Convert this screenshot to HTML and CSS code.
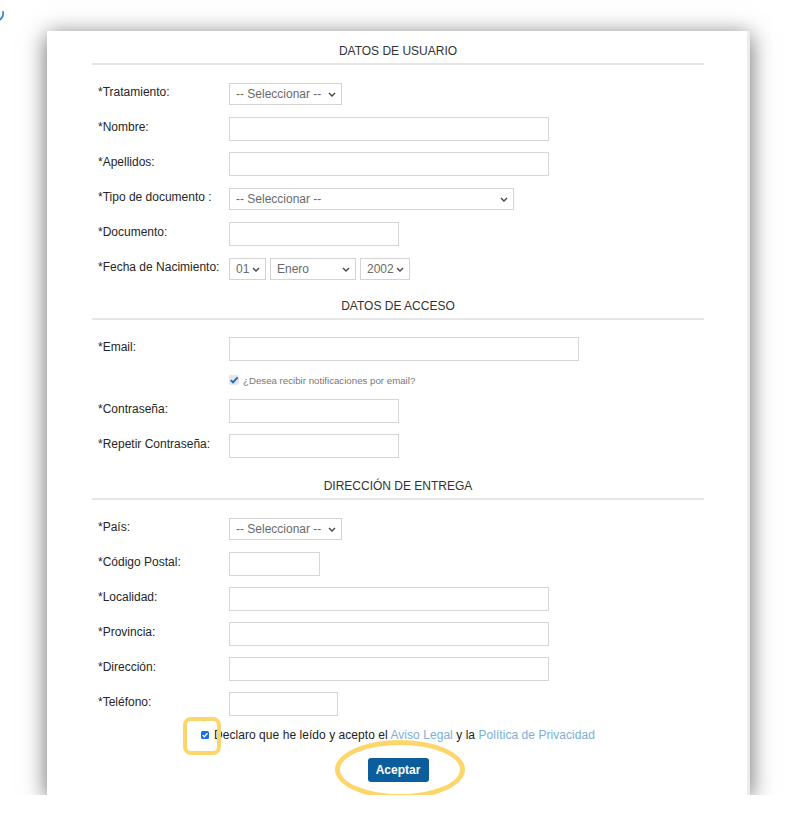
FILE: index.html
```html
<!DOCTYPE html>
<html lang="es">
<head>
<meta charset="utf-8">
<title>Registro</title>
<link rel="stylesheet" href="styles.css">
</head>
<body>
<div class="page">
  <svg class="glyph" width="6" height="10" viewBox="0 0 6 10"><path d="M4 0.5 C4.6 3.5 4 6.5 0.5 9" fill="none" stroke="#2a86dc" stroke-width="1.6" stroke-linecap="round"/></svg>
  <div class="card">
    <div class="form">
      <section class="sec">
        <h2 class="sec-title">DATOS DE USUARIO</h2>
        <div class="rows">
          <div class="row">
            <label class="lbl">*Tratamiento:</label>
            <div class="select w113"><span>-- Seleccionar --</span><svg class="chev" width="8" height="5" viewBox="0 0 8 5"><path d="M1 1 L4 4 L7 1" fill="none" stroke="#444" stroke-width="1.4"/></svg></div>
          </div>
          <div class="row">
            <label class="lbl">*Nombre:</label>
            <input class="inp w320" type="text">
          </div>
          <div class="row">
            <label class="lbl">*Apellidos:</label>
            <input class="inp w320" type="text">
          </div>
          <div class="row">
            <label class="lbl">*Tipo de documento :</label>
            <div class="select w285"><span>-- Seleccionar --</span><svg class="chev" width="8" height="5" viewBox="0 0 8 5"><path d="M1 1 L4 4 L7 1" fill="none" stroke="#444" stroke-width="1.4"/></svg></div>
          </div>
          <div class="row">
            <label class="lbl">*Documento:</label>
            <input class="inp w170" type="text">
          </div>
          <div class="row">
            <label class="lbl">*Fecha de Nacimiento:</label>
            <div class="dates">
              <div class="select w37"><span>01</span><svg class="chev" width="8" height="5" viewBox="0 0 8 5"><path d="M1 1 L4 4 L7 1" fill="none" stroke="#444" stroke-width="1.4"/></svg></div>
              <div class="select w86"><span>Enero</span><svg class="chev" width="8" height="5" viewBox="0 0 8 5"><path d="M1 1 L4 4 L7 1" fill="none" stroke="#444" stroke-width="1.4"/></svg></div>
              <div class="select w50"><span>2002</span><svg class="chev" width="8" height="5" viewBox="0 0 8 5"><path d="M1 1 L4 4 L7 1" fill="none" stroke="#444" stroke-width="1.4"/></svg></div>
            </div>
          </div>
        </div>
      </section>

      <section class="sec sec-access">
        <h2 class="sec-title">DATOS DE ACCESO</h2>
        <div class="rows">
          <div class="row">
            <label class="lbl">*Email:</label>
            <input class="inp w350" type="text">
          </div>
          <div class="notif">
            <span class="cb-soft"><svg width="10" height="10" viewBox="0 0 10 10"><path d="M1.8 5.2 L4 7.4 L8.6 2.4" fill="none" stroke="#1f66b8" stroke-width="1.8"/></svg></span>
            <span class="notif-text">¿Desea recibir notificaciones por email?</span>
          </div>
          <div class="row">
            <label class="lbl">*Contraseña:</label>
            <input class="inp w170" type="password">
          </div>
          <div class="row">
            <label class="lbl">*Repetir Contraseña:</label>
            <input class="inp w170" type="password">
          </div>
        </div>
      </section>

      <section class="sec sec-delivery">
        <h2 class="sec-title">DIRECCIÓN DE ENTREGA</h2>
        <div class="rows">
          <div class="row">
            <label class="lbl">*País:</label>
            <div class="select w113"><span>-- Seleccionar --</span><svg class="chev" width="8" height="5" viewBox="0 0 8 5"><path d="M1 1 L4 4 L7 1" fill="none" stroke="#444" stroke-width="1.4"/></svg></div>
          </div>
          <div class="row">
            <label class="lbl">*Código Postal:</label>
            <input class="inp w91" type="text">
          </div>
          <div class="row">
            <label class="lbl">*Localidad:</label>
            <input class="inp w320" type="text">
          </div>
          <div class="row">
            <label class="lbl">*Provincia:</label>
            <input class="inp w320" type="text">
          </div>
          <div class="row">
            <label class="lbl">*Dirección:</label>
            <input class="inp w320" type="text">
          </div>
          <div class="row">
            <label class="lbl">*Teléfono:</label>
            <input class="inp w109" type="text">
          </div>
        </div>
      </section>

      <div class="legal">
        <span class="cb-blue"><svg width="8" height="8" viewBox="0 0 8 8"><path d="M1.6 4.1 L3.3 5.8 L6.5 2.2" fill="none" stroke="#fff" stroke-width="1.3"/></svg></span>
        <span class="legal-text">Declaro que he leído y acepto el <a class="lnk" href="#">Aviso Legal</a> y la <a class="lnk" href="#">Política de Privacidad</a></span>
      </div>
      <div class="actions">
        <button class="btn" type="button">Aceptar</button>
      </div>
    </div>
    <span class="hl-square"></span>
    <span class="hl-ellipse"></span>
  </div>
</div>
</body>
</html>
```

FILE: styles.css
```css
html, body {
  margin: 0;
  padding: 0;
  background: #ffffff;
}

body {
  font-family: "Liberation Sans", Arial, Helvetica, sans-serif;
  font-size: 12px;
  color: #222;
}

.page {
  padding-top: 11px;
}

.glyph {
  display: block;
  margin-left: -1px;
}

.card {
  position: relative;
  width: 612px;
  margin: 10px 0 0 47px;
  padding: 13px 43px 13px 45px;
  background: #fff;
  border-right: 3px solid #ececec;
  box-shadow: 0 4px 22px rgba(0, 0, 0, 0.6);
}

.form {
  width: 612px;
}

.sec-title {
  margin: 0;
  padding-bottom: 5px;
  border-bottom: 2px solid #e6e6e6;
  font-size: 12px;
  font-weight: normal;
  line-height: 14px;
  text-align: center;
  color: #333;
}

.sec-access {
  margin-top: 18px;
}

.sec-delivery {
  margin-top: 21px;
}

.rows {
  display: flex;
  flex-direction: column;
  gap: 11px;
  margin-top: 17px;
}

.row {
  display: flex;
  align-items: flex-start;
  height: 24px;
  padding-left: 6px;
}

.lbl {
  width: 131px;
  flex: none;
  padding-top: 3px;
  line-height: 14px;
  font-size: 12px;
  color: #262626;
}

.inp {
  display: block;
  box-sizing: border-box;
  height: 24px;
  margin: 0;
  padding: 0 4px;
  border: 1px solid #d6d6d6;
  border-radius: 0;
  background: #fff;
  outline: none;
}

.select {
  display: flex;
  align-items: center;
  justify-content: space-between;
  box-sizing: border-box;
  height: 22px;
  margin-top: 1px;
  padding: 0 5px 0 6px;
  border: 1px solid #d3d3d3;
  background: #fff;
  font-size: 12px;
  color: #6a6a6a;
  white-space: nowrap;
}

.chev {
  display: block;
  flex: none;
}

.dates {
  display: flex;
  gap: 4px;
}

.w37 { width: 37px; }
.w50 { width: 50px; }
.w86 { width: 86px; }
.w91 { width: 91px; }
.w109 { width: 109px; }
.w113 { width: 113px; }
.w170 { width: 170px; }
.w285 { width: 285px; }
.w320 { width: 320px; }
.w350 { width: 350px; }

.notif {
  display: flex;
  align-items: center;
  gap: 4px;
  height: 16px;
  padding-left: 137px;
}

.cb-soft {
  display: block;
  width: 10px;
  height: 10px;
  border-radius: 2px;
  background: #e6e6e6;
}

.cb-soft svg {
  display: block;
}

.notif-text {
  font-size: 9.7px;
  color: #777;
}

.legal {
  display: flex;
  justify-content: center;
  align-items: center;
  gap: 5px;
  margin-top: 12px;
  line-height: 14px;
}

.cb-blue {
  display: block;
  width: 8px;
  height: 8px;
  border-radius: 1.5px;
  background: #1a6fe6;
}

.cb-blue svg {
  display: block;
}

.legal-text {
  font-size: 12px;
  letter-spacing: 0.05px;
  color: #222;
}

.lnk {
  color: #7caed8;
  text-decoration: none;
}

.actions {
  display: flex;
  justify-content: center;
  margin-top: 16px;
}

.btn {
  width: 61px;
  height: 24px;
  padding: 0;
  border: none;
  border-radius: 3px;
  background: #0b5d9c;
  color: #fff;
  font-family: "Liberation Sans", Arial, sans-serif;
  font-size: 12px;
  font-weight: bold;
}

.hl-square {
  position: absolute;
  left: 136px;
  top: 686px;
  width: 38px;
  height: 38px;
  box-sizing: border-box;
  border: 4px solid #fdd66b;
  border-radius: 8px;
}

.hl-ellipse {
  position: absolute;
  left: 288px;
  top: 709px;
  width: 130px;
  height: 59px;
  box-sizing: border-box;
  border: 5px solid #fdd66b;
  border-radius: 50%;
}
```
